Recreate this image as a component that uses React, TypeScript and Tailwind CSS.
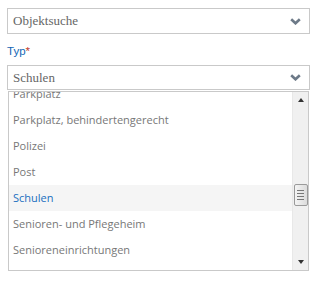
const items = [
  "Parkplatz",
  "Parkplatz, behindertengerecht",
  "Polizei",
  "Post",
  "Schulen",
  "Senioren- und Pflegeheim",
  "Senioreneinrichtungen",
];

const Chevron = () => (
  <svg width="11" height="7" viewBox="0 0 11 7" aria-hidden>
    <path d="M1.2 1.2 L5.5 5.3 L9.8 1.2" fill="none" stroke="#6d7a88" strokeWidth="2.6" />
  </svg>
);

const SelectBox: React.FC<{ value: string; h: string }> = ({ value, h }) => (
  <div
    className={`${h} flex items-center justify-between border border-[#c9c9c9] bg-white pl-[5px] pr-[8px]`}
  >
    <span className="font-['Liberation_Serif',serif] text-[13px] text-[#666]">{value}</span>
    <Chevron />
  </div>
);

export default function App() {
  const selected = "Schulen";
  return (
    <div className="min-h-screen bg-white pl-[7px] pt-[8px]">
      <div className="w-[303px]">
        <SelectBox value="Objektsuche" h="h-[26px]" />

        <div className="mt-[11px] mb-[7px] font-['Liberation_Sans',sans-serif] text-[11.5px] leading-[13px] text-[#1366b5]">
          Typ<span className="text-[#c0392b]">*</span>
        </div>

        <SelectBox value="Schulen" h="h-[25px]" />

        {/* opened list */}
        <div className="mt-[1px] ml-[1px] flex h-[180px] w-[301px] border border-[#c9c9c9] bg-white">
          <div className="flex-1 overflow-hidden">
            <ul className="-mt-[11px] font-['Open_Sans',sans-serif] text-[11px]">
              {items.map((it) => (
                <li
                  key={it}
                  className={
                    it === selected
                      ? "flex h-[26px] items-center bg-[#f5f5f5] pl-[4px] text-[#1a6fc0]"
                      : "flex h-[26px] items-center pl-[4px] text-[#777]"
                  }
                >
                  {it}
                </li>
              ))}
            </ul>
          </div>

          {/* scrollbar */}
          <div className="flex w-[16px] flex-col items-center border-l border-[#e8e8e8] bg-[#f0f0f0]">
            <div className="flex h-[16px] w-full items-center justify-center">
              <div className="h-0 w-0 border-x-[3.5px] border-b-[4px] border-x-transparent border-b-[#333]" />
            </div>
            <div className="h-[76px]" />
            <div className="flex h-[22px] w-[14px] flex-col items-center justify-center gap-[2px] rounded-[2px] border border-[#9a9a9a] bg-gradient-to-r from-[#f4f4f4] to-[#dcdcdc]">
              <div className="h-px w-[7px] bg-[#777]" />
              <div className="h-px w-[7px] bg-[#777]" />
              <div className="h-px w-[7px] bg-[#777]" />
              <div className="h-px w-[7px] bg-[#777]" />
            </div>
            <div className="flex-1" />
            <div className="flex h-[16px] w-full items-center justify-center">
              <div className="h-0 w-0 border-x-[3.5px] border-t-[4px] border-x-transparent border-t-[#333]" />
            </div>
          </div>
        </div>
      </div>
    </div>
  );
}
